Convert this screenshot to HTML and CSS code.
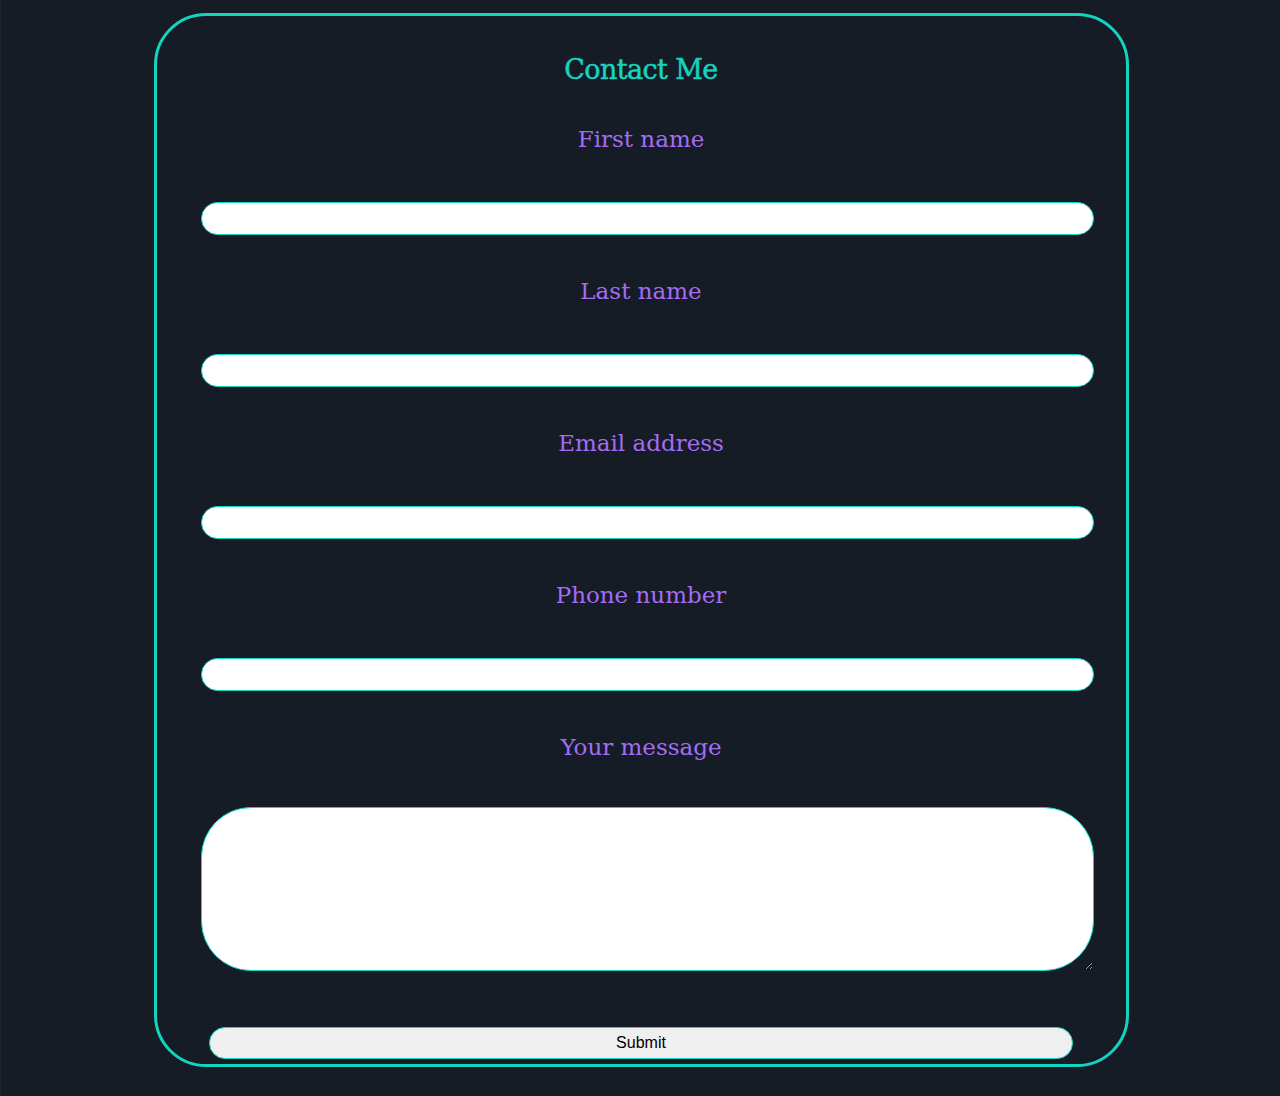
FILE: index.html
```html
<!DOCTYPE html>
<html lang="en">
<head>
<meta charset="utf-8">
<title>Contact Me</title>
<link rel="stylesheet" href="styles.css">
</head>
<body>
<form class="card">
  <h1 class="title">Contact Me</h1>
  <div class="group">
    <label class="label" for="fn">First name</label>
    <input class="field" id="fn" type="text">
  </div>
  <div class="group">
    <label class="label" for="ln">Last name</label>
    <input class="field" id="ln" type="text">
  </div>
  <div class="group">
    <label class="label" for="em">Email address</label>
    <input class="field" id="em" type="email">
  </div>
  <div class="group">
    <label class="label" for="ph">Phone number</label>
    <input class="field" id="ph" type="tel">
  </div>
  <div class="group">
    <label class="label" for="msg">Your message</label>
    <textarea class="area" id="msg"></textarea>
  </div>
  <button class="submit" type="button">Submit</button>
</form>
</body>
</html>
```
FILE: styles.css
```css
html, body {
  margin: 0;
  padding: 0;
  background: #151c25;
}
body {
  padding-top: 13px;
  min-height: 1096px;
  box-sizing: border-box;
  border-left: 1px solid #1f2630;
}
.card {
  box-sizing: border-box;
  width: 975px;
  height: 1054px;
  margin: 0 auto 0 153px;
  border: 3px solid #14d3bf;
  border-radius: 52px;
  padding: 0 32px 0 44px;
  display: flex;
  flex-direction: column;
}
.title {
  margin: 36px 0 0 -13px;
  text-align: center;
  font-family: "DejaVu Serif", serif;
  font-weight: normal;
  font-size: 27px;
  line-height: 36px;
  color: #14d3bf;
  letter-spacing: -0.6px;
  -webkit-text-stroke: 0.5px #14d3bf;
}
.group {
  display: flex;
  flex-direction: column;
}
.label {
  display: block;
  text-align: center;
  margin: 31px 0 0 -13px;
  height: 30px;
  font-family: "DejaVu Serif", serif;
  font-size: 23px;
  line-height: 28px;
  color: #a46cf5;
  font-weight: 300;
}
.group:first-of-type .label {
  margin-top: 37px;
}
.group + .group .label {
  margin-top: 42px;
}
.field {
  margin-top: 47px;
  box-sizing: border-box;
  width: 893px;
  height: 33px;
  border: 1px solid #14d3bf;
  border-radius: 17px;
  background: #fff;
  outline: none;
  padding: 0 12px;
}
.area {
  margin-top: 44px;
  box-sizing: border-box;
  width: 893px;
  height: 164px;
  border: 1px solid #14d3bf;
  border-radius: 50px;
  background: #fff;
  outline: none;
  padding: 12px 20px;
}
.submit {
  margin: 56px 0 0 -13px;
  align-self: center;
  box-sizing: border-box;
  width: 864px;
  height: 32px;
  background: #efefef;
  border: 1px solid #14d3bf;
  border-radius: 16px;
  font-family: "Liberation Sans", Arial, sans-serif;
  font-size: 16px;
  color: #000;
  padding: 0;
}
```
